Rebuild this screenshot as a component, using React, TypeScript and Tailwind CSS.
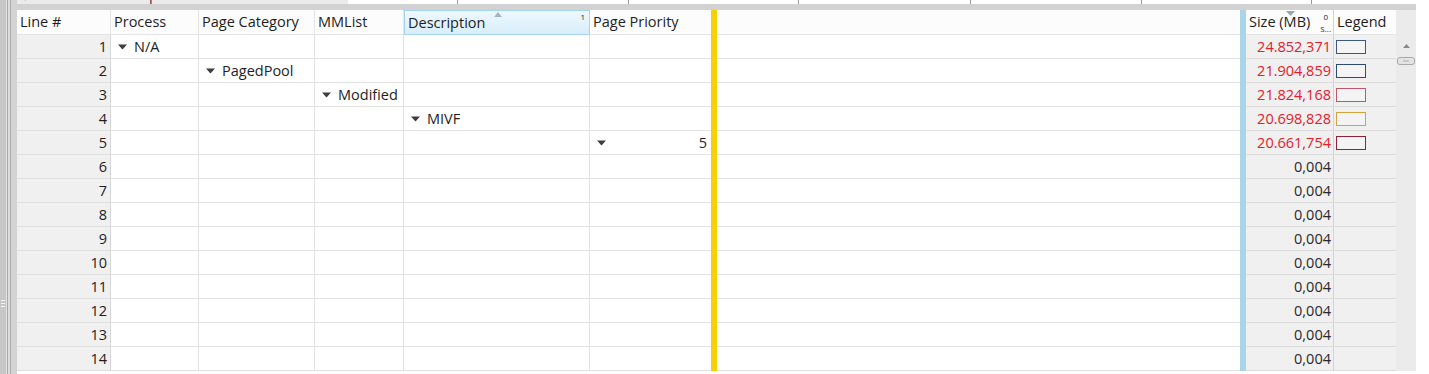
import React from 'react';

const rowCount = 14;

const sizes = ['24.852,371', '21.904,859', '21.824,168', '20.698,828', '20.661,754'];
const legendColors = ['border-[#3b5783]', 'border-[#2e4a78]', 'border-[#c4566b]', 'border-[#d4a33a]', 'border-[#8c2233]'];

const Tri = () => (
  <svg width="9" height="6" viewBox="0 0 9 6" className="shrink-0">
    <polygon points="0,0.5 9,0.5 4.5,5.5" fill="#3d3d3d" />
  </svg>
);

const TreeCell = ({ label }: { label: string }) => (
  <div className="flex items-center gap-[7px] pl-[7px]">
    <Tri />
    <span>{label}</span>
  </div>
);

const cell = 'h-[24px] border-b border-r border-[#e2e2e2] shrink-0';

const Row = ({ i }: { i: number }) => {
  const n = i + 1;
  return (
    <div className="flex h-[24px]">
      <div className={`${cell} w-[94px] bg-[#f0f0f0] border-r-[#d6d6d6] border-b-[#dedede] flex items-center justify-end pr-[3px]`}>{n}</div>
      <div className={`${cell} w-[88px] flex items-center`}>{n === 1 && <TreeCell label="N/A" />}</div>
      <div className={`${cell} w-[116px] flex items-center`}>{n === 2 && <TreeCell label="PagedPool" />}</div>
      <div className={`${cell} w-[89px] flex items-center`}>{n === 3 && <TreeCell label="Modified" />}</div>
      <div className={`${cell} w-[186px] flex items-center`}>{n === 4 && <TreeCell label="MIVF" />}</div>
      <div className={`${cell} w-[121px] border-r-0 flex items-center`}>
        {n === 5 && (
          <div className="flex w-full items-center justify-between pl-[7px] pr-[4px]">
            <Tri />
            <span>5</span>
          </div>
        )}
      </div>
      <div className="h-[24px] w-[6px] shrink-0 bg-[#f7d106]" />
      <div className={`${cell} w-[523px] border-r-0`} />
      <div className="h-[24px] w-[6px] shrink-0 bg-[#a9d5e6]" />
      <div className={`${cell} w-[88px] bg-[#f0f0f0] border-b-[#dcdcdc] border-r-[#c8d6df] flex items-center justify-end pr-[2px] ${n <= 5 ? 'text-[#e3202b]' : 'text-[#2a2a2a]'}`}>
        {n <= 5 ? sizes[i] : '0,004'}
      </div>
      <div className={`${cell} w-[62px] bg-[#f0f0f0] border-b-[#dcdcdc] border-r-0 flex items-center pl-[2px]`}>
        {n <= 5 && <div className={`h-[14px] w-[30px] border ${legendColors[i]} bg-[#f4f4f4]`} />}
      </div>
    </div>
  );
};

const hcell = 'h-[25px] border-b border-r border-[#e4e4e4] bg-[#fcfcfc] shrink-0 flex items-center pl-[3px]';

const Header = () => (
  <div className="flex h-[25px]">
    <div className={`${hcell} w-[94px]`}>Line #</div>
    <div className={`${hcell} w-[88px]`}>Process</div>
    <div className={`${hcell} w-[116px]`}>Page Category</div>
    <div className={`${hcell} w-[89px]`}>MMList</div>
    <div className="relative h-[25px] w-[186px] shrink-0 flex items-center pl-[3px] border border-[#a6d4ee] bg-gradient-to-b from-[#eef8fe] to-[#d8eefb]">
      Description
      <svg width="8" height="5" viewBox="0 0 8 5" className="absolute left-[89px] top-[1px]">
        <polygon points="0,5 8,5 4,0" fill="#9fb7c7" />
      </svg>
      <span className="absolute right-[4px] top-[2px] text-[8px] leading-none">1</span>
    </div>
    <div className={`${hcell} w-[121px] border-r-0`}>Page Priority</div>
    <div className="h-[25px] w-[6px] shrink-0 bg-[#f7d106]" />
    <div className={`${hcell} w-[523px] border-r-0`} />
    <div className="h-[25px] w-[6px] shrink-0 bg-[#a9d5e6]" />
    <div className={`${hcell} relative w-[88px] border-r-[#c8d6df]`}>
      Size (MB)
      <svg width="9" height="5" viewBox="0 0 9 5" className="absolute left-[40px] top-[1px]">
        <polygon points="0,0 9,0 4.5,5" fill="#8fa9bb" />
      </svg>
      <span className="absolute right-[5px] top-[3px] text-[8px] leading-none">0</span>
      <span className="absolute right-[2px] top-[15px] text-[8px] leading-none">S...</span>
    </div>
    <div className={`${hcell} w-[62px] border-r-0`}>Legend</div>
  </div>
);

const Scrollbar = () => (
  <div className="flex w-[20px] shrink-0 flex-col items-center bg-[#ebebeb]">
    <svg width="7" height="4" viewBox="0 0 7 4" className="mt-[34px]">
      <polygon points="0,4 7,4 3.5,0" fill="#8a8a8a" />
    </svg>
    <div className="mt-[9px] flex h-[8px] w-[18px] items-center justify-center rounded-[3px] border border-[#a8a8a8] bg-[#e4e4e4]">
      <div className="h-[2px] w-[6px] bg-[#c8c8c8]" />
    </div>
  </div>
);

const LeftStrip = () => (
  <div className="flex h-[374px] w-[17px] shrink-0">
    <div className="flex w-[6px] flex-col bg-[#c7c7c7]">
      <div className="mt-[300px] flex flex-col gap-[2px] pl-[1px]">
        <div className="h-[1px] w-[4px] bg-[#f4f4f4]" />
        <div className="h-[1px] w-[4px] bg-[#f4f4f4]" />
        <div className="h-[1px] w-[4px] bg-[#f4f4f4]" />
      </div>
    </div>
    <div className="w-[1px] bg-[#e4e4e4]" />
    <div className="w-[1px] bg-[#a9a9a9]" />
    <div className="w-[2px] bg-[#dedede]" />
    <div className="w-[1px] bg-[#a9a9a9]" />
    <div className="w-[6px] bg-[#d3d3d3]" />
  </div>
);

const TopStrip = () => (
  <div className="flex h-[4px] overflow-hidden">
    <div className="flex h-[4px] w-[331px] shrink-0 bg-[#ebebeb]">
      <div className="-mt-[15px] flex h-[19px] items-center">
        <span className="ml-[8px] text-[12px] text-[#555]">▷</span>
        <span className="ml-[73px] text-[#333]">Description: MMSL</span>
      </div>
    </div>
    <div className="h-[4px] w-[1px] bg-[#e7a878]" />
    <div className="h-[4px] w-[29px] bg-[#ebebeb]" />
    <div className="h-[4px] w-[1px] bg-[#e7c0a0]" />
    <div className="flex h-[4px] flex-1 bg-white">
      {[110, 171, 170, 172, 171, 170, 173, 170, 170, 40].map((w, k) => (
        <div key={k} className="h-[4px] border-r border-[#9a9a9a]" style={{ width: w }} />
      ))}
    </div>
  </div>
);

export default function App() {
  return (
    <div className="flex h-[374px] w-[1429px] overflow-hidden bg-white font-['Segoe_UI','Open_Sans',sans-serif] text-[14.5px] text-[#1e1e1e]">
      <LeftStrip />
      <div className="flex w-[1399px] shrink-0 flex-col">
        <TopStrip />
        <div className="h-[6px] bg-[#d2d2d2]" />
        <div className="flex">
          <div className="flex w-[1379px] shrink-0 flex-col">
            <Header />
            {Array.from({ length: rowCount }).map((_, i) => (
              <Row key={i} i={i} />
            ))}
          </div>
          <Scrollbar />
        </div>
      </div>
      <div className="flex-1 bg-white" />
    </div>
  );
}
